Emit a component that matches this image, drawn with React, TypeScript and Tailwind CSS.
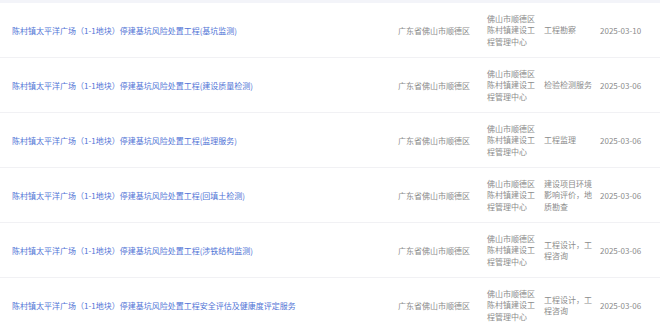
import React from 'react';

interface Row {
    title: string;
    region: string;
    buyer: string;
    category: string;
    date: string;
}

const rows: Row[] = [
    { title: '陈村镇太平洋广场（1-1地块）停建基坑风险处置工程(基坑监测)', region: '广东省佛山市顺德区', buyer: '佛山市顺德区陈村镇建设工程管理中心', category: '工程勘察', date: '2025-03-10' },
    { title: '陈村镇太平洋广场（1-1地块）停建基坑风险处置工程(建设质量检测)', region: '广东省佛山市顺德区', buyer: '佛山市顺德区陈村镇建设工程管理中心', category: '检验检测服务', date: '2025-03-06' },
    { title: '陈村镇太平洋广场（1-1地块）停建基坑风险处置工程(监理服务)', region: '广东省佛山市顺德区', buyer: '佛山市顺德区陈村镇建设工程管理中心', category: '工程监理', date: '2025-03-06' },
    { title: '陈村镇太平洋广场（1-1地块）停建基坑风险处置工程(回填土检测)', region: '广东省佛山市顺德区', buyer: '佛山市顺德区陈村镇建设工程管理中心', category: '建设项目环境影响评价，地质勘查', date: '2025-03-06' },
    { title: '陈村镇太平洋广场（1-1地块）停建基坑风险处置工程(涉铁结构监测)', region: '广东省佛山市顺德区', buyer: '佛山市顺德区陈村镇建设工程管理中心', category: '工程设计，工程咨询', date: '2025-03-06' },
    { title: '陈村镇太平洋广场（1-1地块）停建基坑风险处置工程安全评估及健康度评定服务', region: '广东省佛山市顺德区', buyer: '佛山市顺德区陈村镇建设工程管理中心', category: '工程设计，工程咨询', date: '2025-03-06' },
];

export default function App() {
    return (
        <div className="w-[660px] h-[332px] overflow-hidden bg-white font-['Noto_Sans_CJK_SC',sans-serif] text-[8px] leading-[11.5px]">
            <div className="h-[3px] bg-[#f3f4f9]" />
            {rows.map((r, i) => (
                <div key={i} className="flex items-center h-[55px] border-b border-[#f1f1f4]">
                    <div className="w-[398px] pl-3 pt-px text-[#5174d6] whitespace-nowrap">{r.title}</div>
                    <div className="w-[89px] pt-px text-[#8c8c8c]">{r.region}</div>
                    <div className="w-[57px] pr-[8px] text-[#8c8c8c]">{r.buyer}</div>
                    <div className="w-[56px] pr-[6px] text-[#8c8c8c]">{r.category}</div>
                    <div className="pt-px text-[#8c8c8c]">{r.date}</div>
                </div>
            ))}
        </div>
    );
}
